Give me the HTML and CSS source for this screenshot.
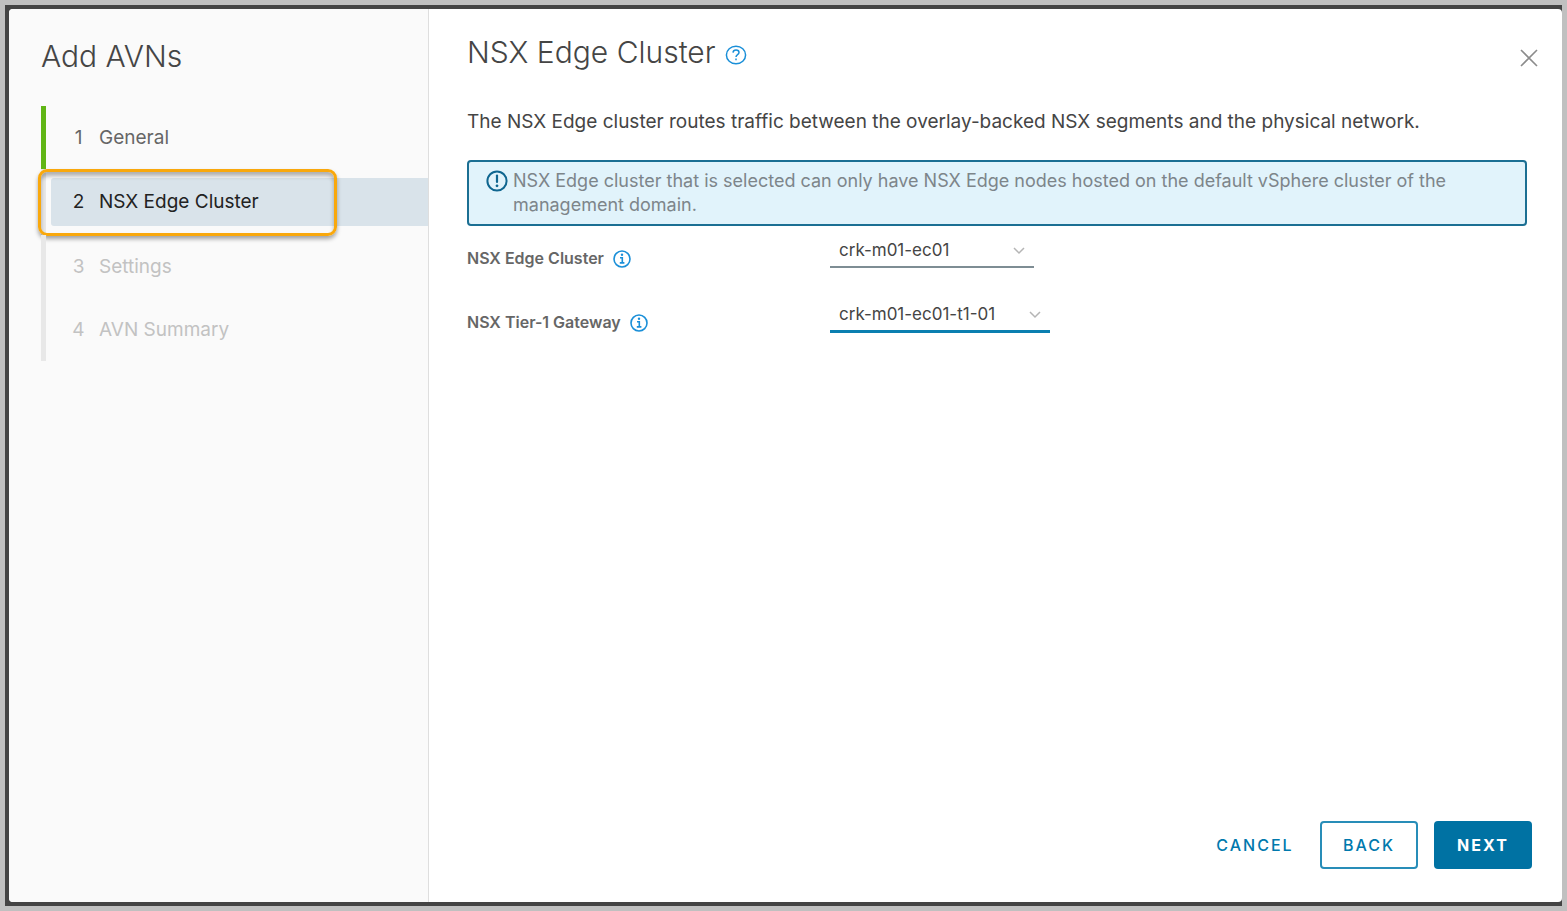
FILE: index.html
```html
<!DOCTYPE html>
<html lang="en">
<head>
<meta charset="utf-8">
<title>Add AVNs</title>
<link rel="stylesheet" href="styles.css">
</head>
<body>
<div class="backdrop">
  <div class="wizard" role="dialog" aria-labelledby="wizard-title">
    <aside class="sidebar">
      <h1 class="wizard-title" id="wizard-title">Add AVNs</h1>
      <ol class="steps">
        <li class="step done"><button type="button" class="step-link"><span class="num">1</span><span>General</span></button></li>
        <li class="step active"><button type="button" class="step-link" aria-current="step"><span class="num">2</span><span>NSX Edge Cluster</span></button><span class="callout"></span></li>
        <li class="step"><button type="button" class="step-link" disabled><span class="num">3</span><span>Settings</span></button></li>
        <li class="step"><button type="button" class="step-link" disabled><span class="num">4</span><span>AVN Summary</span></button></li>
      </ol>
    </aside>
    <main class="content">
      <header class="page-header">
        <h2 class="page-title">NSX Edge Cluster</h2>
        <button type="button" class="icon-button help" aria-label="Help">
          <svg width="22" height="20" viewBox="0 0 22 20" fill="none" stroke="currentColor" stroke-width="1.5"><ellipse cx="11" cy="10" rx="9.6" ry="8.8"/><path d="M8 7.6C8.2 5.8 9.4 5 11 5s3 .9 3 2.5c0 2.2-3 2.2-3 4.5"/><path d="M11 13.6v1.7"/></svg>
        </button>
        <button type="button" class="icon-button close" aria-label="Close">
          <svg width="18" height="18" viewBox="0 0 18 18" fill="none" stroke="currentColor" stroke-width="1.6"><path d="M1 1l16 16M17 1L1 17"/></svg>
        </button>
      </header>
      <div class="page-body">
        <p class="intro">The NSX Edge cluster routes traffic between the overlay-backed NSX segments and the physical network.</p>
        <div class="alert" role="note">
          <svg class="alert-icon" width="22" height="22" viewBox="0 0 22 22" fill="none" stroke="currentColor"><circle cx="11" cy="11" r="9.6" stroke-width="2"/><path d="M11 5.5v6.5" stroke-width="2.2" stroke-linecap="round"/><circle cx="11" cy="15.8" r="1.4" fill="currentColor" stroke="none"/></svg>
          <p class="alert-text">NSX Edge cluster that is selected can only have NSX Edge nodes hosted on the default vSphere cluster of the management domain.</p>
        </div>
        <form class="fields">
          <div class="field">
            <div class="field-label">
              <label for="cluster">NSX Edge Cluster</label>
              <button type="button" class="icon-button info" aria-label="About NSX Edge Cluster"><svg width="18" height="18" viewBox="0 0 18 18" fill="none" stroke="currentColor" stroke-width="1.6"><circle cx="9" cy="9" r="8"/><path d="M7 7.7h2.3v5.2M6.8 12.9h4.6"/><circle cx="9" cy="4.8" r="1.2" fill="currentColor" stroke="none"/></svg></button>
            </div>
            <div class="select-wrap">
              <select id="cluster" class="select"><option>crk-m01-ec01</option></select>
              <svg class="chevron" width="12" height="8" viewBox="0 0 12 8" fill="none" stroke="currentColor" stroke-width="1.5"><path d="M1 1l5 5 5-5"/></svg>
            </div>
          </div>
          <div class="field">
            <div class="field-label">
              <label for="gateway">NSX Tier-1 Gateway</label>
              <button type="button" class="icon-button info" aria-label="About NSX Tier-1 Gateway"><svg width="18" height="18" viewBox="0 0 18 18" fill="none" stroke="currentColor" stroke-width="1.6"><circle cx="9" cy="9" r="8"/><path d="M7 7.7h2.3v5.2M6.8 12.9h4.6"/><circle cx="9" cy="4.8" r="1.2" fill="currentColor" stroke="none"/></svg></button>
            </div>
            <div class="select-wrap focused">
              <select id="gateway" class="select"><option>crk-m01-ec01-t1-01</option></select>
              <svg class="chevron" width="12" height="8" viewBox="0 0 12 8" fill="none" stroke="currentColor" stroke-width="1.5"><path d="M1 1l5 5 5-5"/></svg>
            </div>
          </div>
        </form>
      </div>
      <footer class="actions">
        <button type="button" class="btn link">CANCEL</button>
        <button type="button" class="btn outline">BACK</button>
        <button type="button" class="btn primary">NEXT</button>
      </footer>
    </main>
  </div>
</div>
</body>
</html>
```
FILE: styles.css
```css
* { box-sizing: border-box; }
body {
  margin: 0;
  padding: 5px;
  min-height: 100vh;
  display: flex;
  background: #c0c0c0;
  color: #454545;
  font: 19px/24px Inter, sans-serif;
}
h1, h2, p, ol { margin: 0; padding: 0; font-weight: inherit; }
button, select { font: inherit; color: inherit; border: 0; padding: 0; background: none; }
svg { display: block; }

.backdrop { flex: 1; display: flex; padding: 4px 0 4px 4px; background: #444; }
.wizard { flex: 1; display: flex; background: #fff; border-radius: 4px; overflow: hidden; }

.sidebar { flex: none; width: 420px; padding: 30px 0 0 32px; background: #fafafa; border-right: 1px solid #dedede; }
.wizard-title { font-size: 30px; line-height: 34px; font-weight: 300; }
.steps { list-style: none; margin-top: 33px; }
.step { display: flex; align-items: center; position: relative; height: 63px; border-left: 5px solid #e8e8e8; }
.step.active { height: 66px; }
.step.done { border-left-color: #60b515; }
.step-link { flex: 1; display: flex; gap: 10px; height: 48px; align-items: center; margin-left: 5px; padding-left: 17px; text-align: left; color: #666; border-radius: 3px 0 0 3px; }
.step-link:disabled { color: #c2c2c2; }
.active .step-link { background: #d9e3ea; color: #222; }
.num { width: 21px; text-align: center; }
.callout { position: absolute; left: -8px; top: 0; width: 299px; height: 67px; border: 3px solid #f9a80c; border-radius: 9px; box-shadow: 0 3px 4px rgba(0,0,0,.35), inset 0 4px 4px rgba(0,0,0,.3); pointer-events: none; }

.content { flex: 1; min-width: 0; display: flex; flex-direction: column; padding: 26px 30px 33px 38px; }
.page-header { display: flex; align-items: center; gap: 9px; }
.page-title { font-size: 30px; line-height: 34px; font-weight: 300; }
.icon-button { color: #1a8fd8; }
.help { margin-top: 6px; }
.close { margin: 12px -6px 0 auto; color: #8c8c8c; }

.page-body { flex: 1; padding-right: 5px; }
.intro { margin-top: 41px; }
.alert { display: flex; gap: 5px; margin-top: 26px; padding: 7px 60px 7px 17px; background: #e1f3fb; border: 2px solid #1b6f93; border-radius: 4px; }
.alert-icon { flex: none; margin-top: 1px; color: #0f6690; }
.alert-text { color: #7d858a; font-size: 18px; }
.fields { display: grid; gap: 24px; margin-top: 4px; }
.field { display: grid; grid-template-columns: 363px 1fr; align-items: start; }
.field-label { display: flex; align-items: center; gap: 9px; margin-top: 16px; font-size: 16px; font-weight: 600; color: #666; }
.info { margin-top: 2px; }
.select-wrap { display: grid; align-items: center; justify-self: start; min-width: 204px; border-bottom: 2px solid #7e8d94; }
.select-wrap.focused { border-bottom: 3px solid #0b7fb0; }
.select { grid-area: 1 / 1; appearance: none; height: 36px; padding: 4px 54px 0 9px; font-size: 17px; outline: 0; }
.chevron { grid-area: 1 / 1; justify-self: end; margin: 6px 9px 0 0; color: #b5b5b5; pointer-events: none; }

.actions { display: flex; justify-content: flex-end; gap: 16px; }
.btn { height: 48px; min-width: 98px; border-radius: 4px; font-size: 16px; font-weight: 500; letter-spacing: 2px; color: #0079ad; }
.outline { border: 2px solid #288db8; }
.primary { background: #0072a3; color: #fff; font-weight: 700; }
```
